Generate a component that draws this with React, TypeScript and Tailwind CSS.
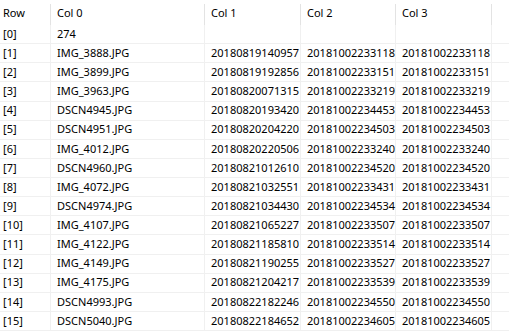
const rows: [string, string, string, string][] = [
  ["274", "", "", ""],
  ["IMG_3888.JPG", "20180819140957", "20181002233118", "20181002233118"],
  ["IMG_3899.JPG", "20180819192856", "20181002233151", "20181002233151"],
  ["IMG_3963.JPG", "20180820071315", "20181002233219", "20181002233219"],
  ["DSCN4945.JPG", "20180820193420", "20181002234453", "20181002234453"],
  ["DSCN4951.JPG", "20180820204220", "20181002234503", "20181002234503"],
  ["IMG_4012.JPG", "20180820220506", "20181002233240", "20181002233240"],
  ["DSCN4960.JPG", "20180821012610", "20181002234520", "20181002234520"],
  ["IMG_4072.JPG", "20180821032551", "20181002233431", "20181002233431"],
  ["DSCN4974.JPG", "20180821034430", "20181002234534", "20181002234534"],
  ["IMG_4107.JPG", "20180821065227", "20181002233507", "20181002233507"],
  ["IMG_4122.JPG", "20180821185810", "20181002233514", "20181002233514"],
  ["IMG_4149.JPG", "20180821190255", "20181002233527", "20181002233527"],
  ["IMG_4175.JPG", "20180821204217", "20181002233539", "20181002233539"],
  ["DSCN4993.JPG", "20180822182246", "20181002234550", "20181002234550"],
  ["DSCN5040.JPG", "20180822184652", "20181002234605", "20181002234605"],
];

const cols = "grid grid-cols-[51px_154px_96px_95px_96px_1fr]";

export default function App() {
  return (
    <div
      className="w-[509px] h-[332px] overflow-hidden bg-white text-[11px] text-black"
      style={{ fontFamily: '"Noto Sans", "Open Sans", sans-serif' }}
    >
      {/* header */}
      <div className={`${cols} h-[25px] items-stretch`}>
        {["Row", "Col 0", "Col 1", "Col 2", "Col 3"].map((h, i) => (
          <div key={h} className="flex items-center pt-[2px]">
            <span className={`flex-1 ${i === 0 ? "pl-[3px]" : "pl-[6px]"}`}>{h}</span>
            <div className="w-px self-stretch mt-[2px] bg-[#e3e3e3]" />
          </div>
        ))}
        <div />
      </div>

      {/* body */}
      {rows.map((r, idx) => (
        <div key={idx} className={`${cols} h-[19.13px] border-b border-[#f0f0f0]`}>
          <div className="flex items-center pl-[3px] border-r border-[#f0f0f0]">[{idx}]</div>
          {r.map((c, j) => (
            <div key={j} className="flex items-center pl-[6px] border-r border-[#f0f0f0] whitespace-nowrap">
              {c}
            </div>
          ))}
          <div />
        </div>
      ))}
    </div>
  );
}
